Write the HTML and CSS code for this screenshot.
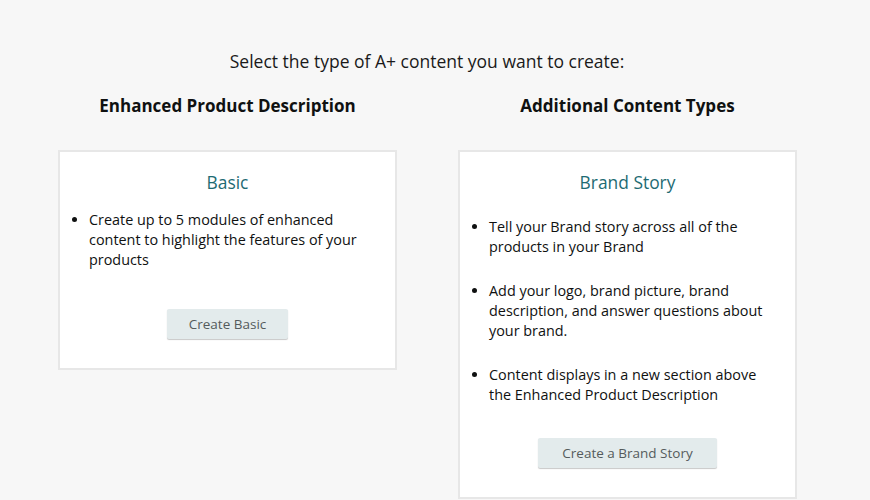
FILE: index.html
```html
<!DOCTYPE html>
<html lang="en">
<head>
<meta charset="utf-8">
<title>A+ content</title>
<link rel="stylesheet" href="styles.css">
</head>
<body>
<main class="page">
  <h1 class="intro">Select the type of A+ content you want to create:</h1>
  <div class="columns">
    <section class="column">
      <h2 class="column-title">Enhanced Product Description</h2>
      <div class="card">
        <h3 class="card-title">Basic</h3>
        <ul class="features features-basic">
          <li>Create up to 5 modules of enhanced content to highlight the features of your products</li>
        </ul>
        <div class="actions actions-basic"><button class="btn" type="button">Create Basic</button></div>
      </div>
    </section>
    <section class="column">
      <h2 class="column-title">Additional Content Types</h2>
      <div class="card">
        <h3 class="card-title">Brand Story</h3>
        <ul class="features features-brand">
          <li>Tell your Brand story across all of the products in your Brand</li>
          <li>Add your logo, brand picture, brand description, and answer questions about your brand.</li>
          <li>Content displays in a new section above the Enhanced Product Description</li>
        </ul>
        <div class="actions actions-brand"><button class="btn btn-wide" type="button">Create a Brand Story</button></div>
      </div>
    </section>
  </div>
</main>
</body>
</html>
```
FILE: styles.css
```css
html, body {
  margin: 0;
  padding: 0;
}
body {
  background: #f7f7f7;
  font-family: "Open Sans", "Noto Sans", sans-serif;
  color: #0f1111;
  height: 500px;
  overflow: hidden;
}
.page {
  width: 854px;
  padding-top: 49px;
}
.intro {
  margin: 0;
  font-size: 17.5px;
  line-height: 24px;
  font-weight: 400;
  color: #1a1a1a;
  text-align: center;
}
.columns {
  display: grid;
  grid-template-columns: 339px 339px;
  column-gap: 61px;
  margin-left: 58px;
  margin-top: 21px;
}
.column-title {
  margin: 0 0 32px;
  font-size: 17px;
  line-height: 24px;
  font-weight: 700;
  text-align: center;
}
.card {
  background: #fff;
  border: 2px solid #e7e7e7;
}
.card-title {
  margin: 0;
  padding-top: 18px;
  font-size: 17.4px;
  line-height: 24px;
  font-weight: 400;
  color: #1e6b73;
  text-align: center;
}
.features {
  margin: 0;
  padding: 0 30px 0 29px;
  font-size: 14.4px;
  line-height: 20px;
}
.features-basic {
  margin-top: 16px;
}
.features-brand {
  margin-top: 23px;
}
.features-brand li + li {
  margin-top: 24px;
}
.actions {
  display: flex;
  justify-content: center;
  padding-bottom: 29px;
}
.actions-basic {
  margin-top: 39px;
}
.actions-brand {
  margin-top: 33px;
}
.btn {
  width: 121px;
  height: 30px;
  border: 0;
  border-radius: 2px;
  background: #e3ebec;
  box-shadow: 0 1px 1px rgba(0, 0, 0, 0.22);
  color: #555b5c;
  font-family: inherit;
  font-size: 13.5px;
  padding: 0;
}
.btn-wide {
  width: 179px;
}
```
